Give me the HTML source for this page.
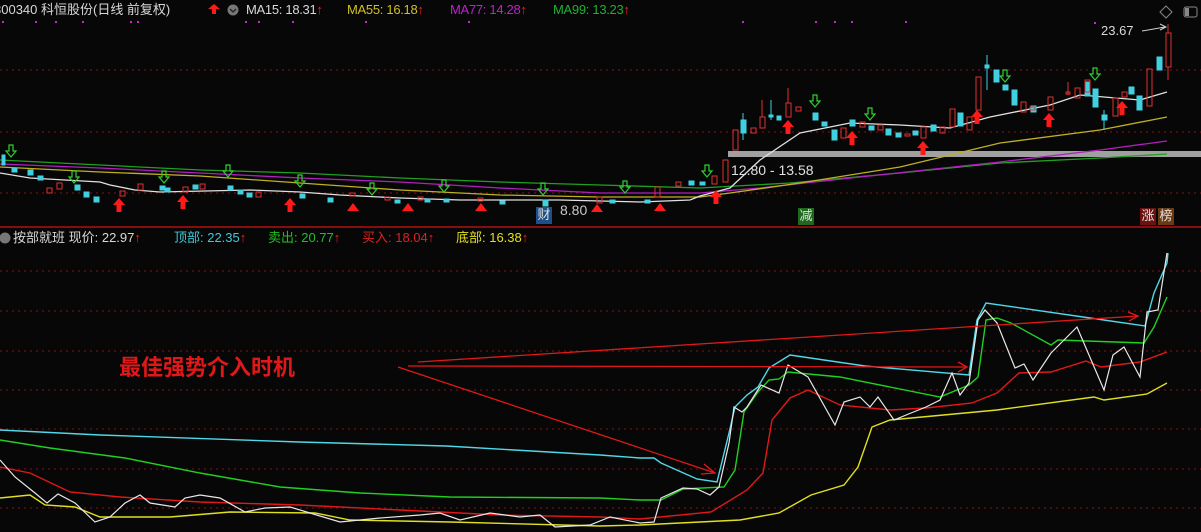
<!DOCTYPE html>
<html><head><meta charset="utf-8"><style>
html,body{margin:0;padding:0;background:#070707;width:1201px;height:532px;overflow:hidden}
.t{position:absolute;font-family:"Liberation Sans","Noto Sans CJK SC",sans-serif;font-size:13px;white-space:nowrap;line-height:16px}
</style></head><body>
<svg width="1201" height="532" style="position:absolute;left:0;top:0" xmlns="http://www.w3.org/2000/svg">
<g stroke="#8a1010" stroke-width="1" stroke-dasharray="2,4">
<line x1="0" y1="70" x2="1201" y2="70"/><line x1="0" y1="132" x2="1201" y2="132"/><line x1="0" y1="193" x2="1201" y2="193"/>
<line x1="0" y1="271" x2="1201" y2="271"/><line x1="0" y1="311" x2="1201" y2="311"/><line x1="0" y1="351" x2="1201" y2="351"/><line x1="0" y1="390" x2="1201" y2="390"/><line x1="0" y1="429" x2="1201" y2="429"/><line x1="0" y1="469" x2="1201" y2="469"/><line x1="0" y1="508" x2="1201" y2="508"/>
</g>
<line x1="0" y1="227" x2="1201" y2="227" stroke="#b01010" stroke-width="1.5"/>
<g fill="#d020d0"><rect x="2" y="21" width="2" height="2"/><rect x="35" y="21" width="2" height="2"/><rect x="55" y="21" width="2" height="2"/><rect x="82" y="21" width="2" height="2"/><rect x="130" y="21" width="2" height="2"/><rect x="137" y="21" width="2" height="2"/><rect x="245" y="21" width="2" height="2"/><rect x="258" y="21" width="2" height="2"/><rect x="292" y="21" width="2" height="2"/><rect x="365" y="21" width="2" height="2"/><rect x="468" y="21" width="2" height="2"/><rect x="742" y="21" width="2" height="2"/><rect x="815" y="21" width="2" height="2"/><rect x="834" y="21" width="2" height="2"/><rect x="851" y="21" width="2" height="2"/><rect x="905" y="21" width="2" height="2"/><rect x="1094" y="22" width="2" height="2"/></g>
<rect x="728" y="151" width="473" height="6" fill="#a0a0a0"/>
<g fill="none" stroke-width="1.3">
<polyline stroke="#20a020" points="0,160 100,165 200,170 300,173 400,178 500,182 600,185 700,188 790,183 900,173 1000,163 1100,158 1167,154"/>
<polyline stroke="#b020c0" points="0,164 100,168 200,173 300,178 400,182 500,188 600,193 700,193 760,188 860,177 1000,162 1100,150 1167,141"/>
<polyline stroke="#c0b020" points="0,167 100,172 200,176 300,183 400,190 500,195 600,197 700,197 730,193 800,183 900,167 1000,143 1100,130 1167,117"/>
<polyline stroke="#e0e0e0" points="0,173 30,178 100,182 110,185 135,190 160,192 250,190 300,192 340,195 400,198 460,200 560,200 640,202 690,200 700,196 730,188 760,160 800,133 850,123 900,125 950,128 990,117 1050,105 1080,95 1140,100 1167,92"/>
</g>
<g stroke-width="1">
<g fill="#40d0e0" stroke="#40d0e0">
<rect x="2" y="155" width="3" height="10"/><rect x="12" y="168" width="5" height="4"/><rect x="28" y="170" width="5" height="5"/><rect x="38" y="176" width="5" height="4"/><rect x="75" y="185" width="5" height="5"/><rect x="84" y="192" width="5" height="5"/><rect x="94" y="197" width="5" height="5"/><rect x="160" y="186" width="5" height="4"/><rect x="165" y="188" width="5" height="4"/><rect x="193" y="185" width="5" height="4"/><rect x="228" y="186" width="5" height="4"/><rect x="238" y="190" width="5" height="4"/><rect x="247" y="193" width="5" height="4"/><rect x="300" y="194" width="5" height="4"/><rect x="328" y="198" width="5" height="4"/><rect x="395" y="200" width="5" height="3"/><rect x="425" y="199" width="5" height="3"/><rect x="444" y="199" width="5" height="3"/><rect x="500" y="201" width="5" height="3"/><rect x="543" y="200" width="5" height="6"/><rect x="610" y="200" width="5" height="3"/><rect x="645" y="200" width="5" height="3"/><rect x="689" y="181" width="5" height="4"/><rect x="700" y="182" width="5" height="3"/>
</g>
<g fill="none" stroke="#e03030">
<rect x="47" y="188" width="5" height="5"/><rect x="57" y="183" width="5" height="6"/><rect x="120" y="191" width="5" height="5"/><rect x="138" y="184" width="5" height="6"/><rect x="183" y="187" width="5" height="5"/><rect x="200" y="184" width="5" height="5"/><rect x="256" y="192" width="5" height="5"/><rect x="350" y="193" width="5" height="3"/><rect x="385" y="197" width="5" height="3"/><rect x="418" y="197" width="5" height="3"/><rect x="478" y="198" width="5" height="3"/><rect x="597" y="197" width="5" height="6"/><rect x="655" y="187" width="5" height="10"/><rect x="676" y="182" width="5" height="4"/><rect x="712" y="176" width="5" height="8"/><rect x="723" y="160" width="5" height="22"/>
</g>
<g fill="#40d0e0" stroke="#40d0e0">
<rect x="741" y="120" width="5" height="13"/><line x1="743" y1="113" x2="743" y2="140"/><rect x="769" y="115" width="4" height="2"/><line x1="771" y1="100" x2="771" y2="120"/><rect x="777" y="116" width="4" height="4"/><rect x="813" y="113" width="5" height="7"/><rect x="822" y="122" width="5" height="4"/><rect x="832" y="130" width="5" height="10"/><rect x="850" y="120" width="5" height="6"/><rect x="869" y="126" width="5" height="4"/><rect x="886" y="129" width="5" height="6"/><rect x="896" y="133" width="5" height="4"/><rect x="913" y="131" width="5" height="4"/><rect x="931" y="125" width="5" height="6"/><rect x="958" y="113" width="5" height="13"/><rect x="985" y="65" width="4" height="3"/><line x1="987" y1="55" x2="987" y2="90"/><rect x="994" y="70" width="5" height="12"/><rect x="1003" y="85" width="5" height="5"/><rect x="1012" y="90" width="5" height="15"/><rect x="1031" y="106" width="5" height="6"/><rect x="1085" y="82" width="5" height="14"/><rect x="1093" y="89" width="5" height="18"/><rect x="1102" y="115" width="5" height="5"/><line x1="1104" y1="110" x2="1104" y2="130"/><rect x="1129" y="87" width="5" height="7"/><rect x="1137" y="96" width="5" height="14"/><rect x="1157" y="57" width="5" height="13"/></g>
<g fill="none" stroke="#e03030">
<rect x="733" y="130" width="5" height="20"/><rect x="751" y="128" width="5" height="5"/><rect x="760" y="117" width="5" height="11"/><line x1="762" y1="100" x2="762" y2="117"/><rect x="786" y="103" width="5" height="14"/><line x1="788" y1="88" x2="788" y2="103"/><rect x="796" y="107" width="5" height="4"/><rect x="841" y="128" width="5" height="10"/><rect x="860" y="122" width="5" height="5"/><rect x="878" y="125" width="5" height="5"/><rect x="905" y="134" width="5" height="2"/><rect x="921" y="127" width="5" height="11"/><rect x="940" y="127" width="5" height="6"/><rect x="950" y="109" width="5" height="18"/><rect x="967" y="117" width="5" height="13"/><rect x="976" y="77" width="5" height="33"/><rect x="1021" y="102" width="5" height="10"/><rect x="1030" y="107" width="5" height="3"/><rect x="1048" y="97" width="5" height="13"/><rect x="1066" y="92" width="4" height="2"/><line x1="1068" y1="82" x2="1068" y2="95"/><rect x="1075" y="88" width="5" height="10"/><rect x="1085" y="80" width="5" height="12"/><rect x="1113" y="98" width="5" height="18"/><rect x="1122" y="92" width="5" height="5"/><rect x="1147" y="69" width="5" height="37"/><rect x="1166" y="33" width="5" height="34"/><line x1="1168" y1="24" x2="1168" y2="33"/><line x1="1168" y1="67" x2="1168" y2="80"/>
</g>
</g>
<g fill="#ff1a1a">
<path d="M0,-7 L6,0 L2.5,0 L2.5,7 L-2.5,7 L-2.5,0 L-6,0Z" transform="translate(788,127)"/>
<path d="M0,-7 L6,0 L2.5,0 L2.5,7 L-2.5,7 L-2.5,0 L-6,0Z" transform="translate(852,138)"/>
<path d="M0,-7 L6,0 L2.5,0 L2.5,7 L-2.5,7 L-2.5,0 L-6,0Z" transform="translate(923,148)"/>
<path d="M0,-7 L6,0 L2.5,0 L2.5,7 L-2.5,7 L-2.5,0 L-6,0Z" transform="translate(977,117)"/>
<path d="M0,-7 L6,0 L2.5,0 L2.5,7 L-2.5,7 L-2.5,0 L-6,0Z" transform="translate(1049,120)"/>
<path d="M0,-7 L6,0 L2.5,0 L2.5,7 L-2.5,7 L-2.5,0 L-6,0Z" transform="translate(1122,108)"/>
<path d="M0,-7 L6,0 L2.5,0 L2.5,7 L-2.5,7 L-2.5,0 L-6,0Z" transform="translate(119,205)"/>
<path d="M0,-7 L6,0 L2.5,0 L2.5,7 L-2.5,7 L-2.5,0 L-6,0Z" transform="translate(183,202)"/>
<path d="M0,-7 L6,0 L2.5,0 L2.5,7 L-2.5,7 L-2.5,0 L-6,0Z" transform="translate(290,205)"/>
<path d="M0,-7 L6,0 L2.5,0 L2.5,7 L-2.5,7 L-2.5,0 L-6,0Z" transform="translate(716,197)"/>
<path d="M-6,4 L0,-4 L6,4Z" transform="translate(353,207)"/><path d="M-6,4 L0,-4 L6,4Z" transform="translate(408,207)"/><path d="M-6,4 L0,-4 L6,4Z" transform="translate(481,207)"/><path d="M-6,4 L0,-4 L6,4Z" transform="translate(597,208)"/><path d="M-6,4 L0,-4 L6,4Z" transform="translate(660,207)"/>
<path d="M208,9 L214,4 L220,9Z"/><rect x="212" y="9" width="4" height="5"/>
</g>
<g fill="none" stroke="#30d030" stroke-width="1.2">
<path d="M-2,-7 L2,-7 L2,-1 L5,-1 L0,5 L-5,-1 L-2,-1Z" transform="translate(11,152)"/>
<path d="M-2,-7 L2,-7 L2,-1 L5,-1 L0,5 L-5,-1 L-2,-1Z" transform="translate(74,178)"/>
<path d="M-2,-7 L2,-7 L2,-1 L5,-1 L0,5 L-5,-1 L-2,-1Z" transform="translate(164,178)"/>
<path d="M-2,-7 L2,-7 L2,-1 L5,-1 L0,5 L-5,-1 L-2,-1Z" transform="translate(228,172)"/>
<path d="M-2,-7 L2,-7 L2,-1 L5,-1 L0,5 L-5,-1 L-2,-1Z" transform="translate(300,182)"/>
<path d="M-2,-7 L2,-7 L2,-1 L5,-1 L0,5 L-5,-1 L-2,-1Z" transform="translate(372,190)"/>
<path d="M-2,-7 L2,-7 L2,-1 L5,-1 L0,5 L-5,-1 L-2,-1Z" transform="translate(444,187)"/>
<path d="M-2,-7 L2,-7 L2,-1 L5,-1 L0,5 L-5,-1 L-2,-1Z" transform="translate(543,190)"/>
<path d="M-2,-7 L2,-7 L2,-1 L5,-1 L0,5 L-5,-1 L-2,-1Z" transform="translate(625,188)"/>
<path d="M-2,-7 L2,-7 L2,-1 L5,-1 L0,5 L-5,-1 L-2,-1Z" transform="translate(707,172)"/>
<path d="M-2,-7 L2,-7 L2,-1 L5,-1 L0,5 L-5,-1 L-2,-1Z" transform="translate(815,102)"/>
<path d="M-2,-7 L2,-7 L2,-1 L5,-1 L0,5 L-5,-1 L-2,-1Z" transform="translate(870,115)"/>
<path d="M-2,-7 L2,-7 L2,-1 L5,-1 L0,5 L-5,-1 L-2,-1Z" transform="translate(1005,77)"/>
<path d="M-2,-7 L2,-7 L2,-1 L5,-1 L0,5 L-5,-1 L-2,-1Z" transform="translate(1095,75)"/>
</g>
<path d="M1142,31 L1165,27 M1160,24 L1166,27 L1160,30" stroke="#d0d0d0" fill="none"/>
<path d="M1166,6 L1172,12 L1166,18 L1160,12Z" fill="none" stroke="#888"/>
<rect x="1184" y="7" width="13" height="10" rx="2" fill="none" stroke="#888"/><rect x="1185" y="8" width="4" height="8" fill="#888"/>
<circle cx="233" cy="10" r="5.5" fill="#777"/><path d="M230,9 L233,12 L236,9" stroke="#222" fill="none" stroke-width="1.3"/>
<circle cx="5" cy="238" r="5.5" fill="#777"/>
<g fill="none" stroke-width="1.4">
<polyline stroke="#50d8e8" points="0,430 100,435 299,442 446,446 600,455 640,458 654,458 661,463 697,479 717,482 729,433 735,407 747,395 758,387 769,368 790,355 865,366 969,375 977,320 986,303 1090,318 1145,326 1154,293 1167,263 1168,253"/>
<polyline stroke="#20d020" points="0,440 50,448 125,458 200,473 280,487 360,493 450,497 600,498 640,500 661,500 683,489 724,487 735,470 744,412 758,392 769,380 779,379 788,372 840,377 940,397 969,385 978,377 986,320 997,318 1011,323 1051,345 1058,340 1144,343 1154,327 1167,297"/>
<polyline stroke="#e01818" points="0,467 30,473 70,492 120,497 200,502 300,505 400,510 500,515 600,517 640,519 711,512 747,490 763,473 772,420 790,398 808,390 840,405 890,410 926,408 972,403 997,393 1019,373 1051,372 1086,361 1101,367 1140,362 1167,352"/>
<polyline stroke="#e0e020" points="0,498 30,495 45,505 75,507 100,517 170,517 230,512 315,513 350,520 450,522 600,526 640,525 740,520 779,513 811,495 844,485 858,467 872,427 890,420 997,410 1094,397 1104,400 1147,394 1167,383"/>
<polyline stroke="#e8e8e8" stroke-width="1.2" points="0,460 15,477 35,493 47,503 58,494 75,503 95,522 110,517 125,503 140,495 150,503 175,507 185,498 200,495 220,498 245,512 265,508 290,507 310,513 340,522 380,518 420,515 440,513 460,520 490,513 520,517 540,515 555,527 590,525 610,517 640,523 654,522 661,498 683,488 697,489 710,495 719,487 729,443 734,407 742,412 747,407 761,385 779,393 788,365 808,377 835,425 844,402 860,397 870,407 878,397 894,420 911,413 926,407 940,400 952,373 960,395 969,383 978,320 985,310 997,323 1015,368 1024,364 1033,380 1051,353 1077,327 1104,390 1113,355 1124,347 1140,377 1147,312 1158,310 1167,253"/>
</g>
<g stroke="#e01818" stroke-width="1.3" fill="none">
<line x1="398" y1="367" x2="715" y2="473"/><path d="M704,464 L715,473 L701,474"/>
<line x1="408" y1="366" x2="967" y2="367"/><path d="M958,362 L967,367 L958,372"/>
<line x1="418" y1="362" x2="1138" y2="316"/><path d="M1128,312 L1138,316 L1129,321"/>
</g>
</svg>
<div class="t" style="left:-6px;top:2px;color:#d8d8d8">300340 科恒股份(日线 前复权)</div>
<div class="t" style="left:246px;top:2px;color:#d8d8d8;letter-spacing:-0.3px">MA15: 18.31<span style="color:#f02020">↑</span></div>
<div class="t" style="left:347px;top:2px;color:#d0c020;letter-spacing:-0.3px">MA55: 16.18<span style="color:#f02020">↑</span></div>
<div class="t" style="left:450px;top:2px;color:#c020d0;letter-spacing:-0.3px">MA77: 14.28<span style="color:#f02020">↑</span></div>
<div class="t" style="left:553px;top:2px;color:#20b030;letter-spacing:-0.3px">MA99: 13.23<span style="color:#f02020">↑</span></div>
<div class="t" style="left:1101px;top:23px;color:#d8d8d8">23.67</div>
<div class="t" style="left:731px;top:162px;color:#e0e0e0;font-size:14px">12.80 - 13.58</div>
<div class="t" style="left:560px;top:202px;color:#c8c8c8;font-size:14px">8.80</div>
<div class="t" style="left:536px;top:207px;width:16px;height:17px;background:#1d4f88;color:#e0e0e0;text-align:center">财</div>
<div class="t" style="left:798px;top:208px;width:16px;height:17px;background:#1d6a1d;color:#e0e0e0;text-align:center">减</div>
<div class="t" style="left:1140px;top:208px;width:16px;height:17px;background:#6a1212;color:#e0e0e0;text-align:center">涨</div>
<div class="t" style="left:1158px;top:208px;width:16px;height:17px;background:#6a3a12;color:#e0e0e0;text-align:center">榜</div>
<div class="t" style="left:13px;top:230px;color:#d8d8d8">按部就班 现价: 22.97<span style="color:#f02020">↑</span></div>
<div class="t" style="left:174px;top:230px;color:#40c8d8">顶部: 22.35<span style="color:#f02020">↑</span></div>
<div class="t" style="left:268px;top:230px;color:#20c020">卖出: 20.77<span style="color:#f02020">↑</span></div>
<div class="t" style="left:362px;top:230px;color:#e02020">买入: 18.04<span style="color:#f02020">↑</span></div>
<div class="t" style="left:456px;top:230px;color:#e0e020">底部: 16.38<span style="color:#f02020">↑</span></div>
<div class="t" style="left:119px;top:353px;color:#e01818;font-size:22px;line-height:26px;font-family:'Noto Sans CJK SC',sans-serif;font-weight:bold">最佳强势介入时机</div>
</body></html>
